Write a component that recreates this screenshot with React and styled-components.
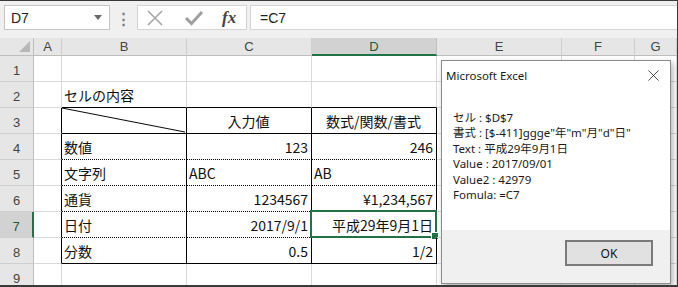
import React from 'react';
import styled, { createGlobalStyle } from 'styled-components';

const Global = createGlobalStyle`
  html, body { margin: 0; padding: 0; background: #fff; }
  * { box-sizing: border-box; }
`;

const Frame = styled.div`
  position: relative;
  width: 678px;
  height: 287px;
  overflow: hidden;
  background: #f0f0f0;
  border-top: 1px solid #3a3a3a;
  border-right: 1px solid #3a3a3a;
  border-bottom: 2px solid #3a3a3a;
  font-family: "Noto Sans CJK JP", "Noto Sans", sans-serif;
`;

const Toolbar = styled.div`
  height: 37px;
  display: flex;
  align-items: flex-start;
  padding: 4px 0 0 4px;
`;

const NameBox = styled.div`
  width: 106px;
  height: 25px;
  background: #fff;
  border: 1px solid #c6c6c6;
  display: flex;
  align-items: center;
  justify-content: space-between;
  padding: 0 7px 0 6px;
  font-family: "Liberation Sans", Arial, sans-serif;
  font-size: 14px;
  color: #222;
`;

const Caret = styled.span`
  width: 0;
  height: 0;
  border-left: 4px solid transparent;
  border-right: 4px solid transparent;
  border-top: 5px solid #6a6a6a;
`;

const Dots = styled.div`
  width: 27px;
  height: 25px;
  display: flex;
  align-items: center;
  justify-content: center;
  color: #7a7a7a;
  font-size: 15px;
  font-weight: bold;
`;

const IconBox = styled.div`
  width: 110px;
  height: 25px;
  background: #fff;
  border: 1px solid #d4d4d4;
  display: flex;
  align-items: center;
  padding-left: 8px;
  gap: 20px;
`;

const Fx = styled.span`
  font-family: "Liberation Serif", "Times New Roman", serif;
  font-style: italic;
  font-weight: bold;
  font-size: 17px;
  color: #444;
  margin-left: -2px;
`;

const FormulaInput = styled.div`
  flex: 1;
  height: 25px;
  margin-left: 3px;
  background: #fff;
  border: 1px solid #d4d4d4;
  border-right: none;
  display: flex;
  align-items: center;
  padding-left: 9px;
  font-family: "Liberation Sans", Arial, sans-serif;
  font-size: 14px;
  color: #222;
`;

const Sheet = styled.div`
  display: grid;
  grid-template-columns: 34px 28px 125px 125px 125px 125px 73px 1fr;
  grid-template-rows: 18px repeat(9, 26px);
  background: #fff;
`;

const ColHead = styled.div`
  background: ${p => (p.$active ? '#d2d2d2' : '#e6e6e6')};
  border-right: 1px solid ${p => (p.$active ? '#c0c0c0' : '#cfcfcf')};
  border-bottom: ${p => (p.$active ? '2px solid #217346' : '1px solid #bdbdbd')};
  display: flex;
  align-items: center;
  justify-content: center;
  font-family: "Liberation Sans", Arial, sans-serif;
  font-size: 13px;
  color: ${p => (p.$active ? '#1f5b3a' : '#444')};
`;

const Corner = styled.div`
  position: relative;
  background: #e6e6e6;
  border-right: 1px solid #bdbdbd;
  border-bottom: 1px solid #bdbdbd;
  &::after {
    content: '';
    position: absolute;
    right: 3px;
    bottom: 3px;
    border-left: 11px solid transparent;
    border-bottom: 11px solid #b8b8b8;
  }
`;

const RowHead = styled.div`
  background: ${p => (p.$active ? '#d2d2d2' : '#e6e6e6')};
  border-bottom: 1px solid #cfcfcf;
  border-right: ${p => (p.$active ? '2px solid #217346' : '1px solid #bdbdbd')};
  display: flex;
  align-items: flex-end;
  justify-content: center;
  padding-bottom: 3px;
  font-family: "Liberation Sans", Arial, sans-serif;
  font-size: 13px;
  color: ${p => (p.$active ? '#1f5b3a' : '#444')};
`;

const lineStyle = {
  grid: '1px solid #d9d9d9',
  solid: '1px solid #000',
  dotted: '1px dotted #000',
};

const Cell = styled.div`
  position: relative;
  border-right: ${p => lineStyle[p.$r || 'grid']};
  border-bottom: ${p => lineStyle[p.$b || 'grid']};
  display: flex;
  align-items: flex-end;
  justify-content: ${p => ({ left: 'flex-start', right: 'flex-end', center: 'center' }[p.$align || 'left'])};
  padding: 0 3px 2px 2px;
  font-size: 14px;
  color: #111;
  white-space: nowrap;
`;

const Diagonal = styled.svg`
  position: absolute;
  inset: 0;
  width: 100%;
  height: 100%;
`;

const Selection = styled.div`
  position: absolute;
  left: -2px;
  top: -2px;
  right: -1px;
  bottom: -1px;
  border: 2px solid #217346;
  pointer-events: none;
  &::after {
    content: '';
    position: absolute;
    right: -4px;
    bottom: -4px;
    width: 6px;
    height: 6px;
    background: #217346;
    border: 1px solid #fff;
  }
`;

const Dialog = styled.div`
  position: absolute;
  left: 441px;
  top: 59px;
  width: 230px;
  height: 224px;
  background: #fff;
  border: 1px solid #8c8c8c;
  box-shadow: 2px 3px 6px rgba(0, 0, 0, 0.3);
  display: flex;
  flex-direction: column;
  font-family: "Noto Sans", "Noto Sans CJK JP", sans-serif;
  color: #1a1a1a;
`;

const TitleBar = styled.div`
  height: 28px;
  display: flex;
  align-items: center;
  justify-content: space-between;
  padding: 0 10px 0 4px;
  font-size: 11.5px;
`;

const Body = styled.div`
  flex: 1;
  padding: 21px 0 0 11px;
  font-size: 11.5px;
  line-height: 15.4px;
  font-family: "Noto Sans", "Noto Sans CJK JP", sans-serif;
`;

const Footer = styled.div`
  height: 53px;
  background: #f0f0f0;
  display: flex;
  justify-content: flex-end;
  align-items: flex-start;
  padding: 10px 17px 0 0;
`;

const OkButton = styled.button`
  width: 88px;
  height: 26px;
  background: #e1e1e1;
  border: 2px solid #7a7a7a;
  font-family: "Noto Sans", sans-serif;
  font-size: 12px;
  color: #111;
  padding: 0;
`;

const cols = ['A', 'B', 'C', 'D', 'E', 'F', 'G'];

const table = {
  2: { B: { text: 'セルの内容' } },
  3: { B: { diag: true }, C: { text: '入力値', align: 'center' }, D: { text: '数式/関数/書式', align: 'center' } },
  4: { B: { text: '数値' }, C: { text: '123', align: 'right' }, D: { text: '246', align: 'right' } },
  5: { B: { text: '文字列' }, C: { text: 'ABC' }, D: { text: 'AB' } },
  6: { B: { text: '通貨' }, C: { text: '1234567', align: 'right' }, D: { text: '¥1,234,567', align: 'right' } },
  7: { B: { text: '日付' }, C: { text: '2017/9/1', align: 'right' }, D: { text: '平成29年9月1日', align: 'right', selected: true } },
  8: { B: { text: '分数' }, C: { text: '0.5', align: 'right' }, D: { text: '1/2', align: 'right' } },
};

const inTable = (r, c) => r >= 3 && r <= 8 && ['B', 'C', 'D'].includes(c);

function borders(r, c) {
  let right = 'grid';
  let bottom = 'grid';
  if (inTable(r, c)) {
    right = 'solid';
    bottom = r === 3 || r === 8 ? 'solid' : 'dotted';
  }
  if (c === 'A' && r >= 3 && r <= 8) right = 'solid';
  if (r === 2 && ['B', 'C', 'D'].includes(c)) bottom = 'solid';
  return { right, bottom };
}

const Cross = ({ size = 18, color = '#a6a6a6', width = 1.6 }) => (
  <svg width={size} height={size} viewBox="0 0 18 18">
    <path d="M2 2 L16 16 M16 2 L2 16" stroke={color} strokeWidth={width} fill="none" />
  </svg>
);

const Check = () => (
  <svg width="20" height="18" viewBox="0 0 20 18">
    <path d="M2 9 L7.5 14.5 L18 3" stroke="#a0a0a0" strokeWidth="3" fill="none" />
  </svg>
);

export default function App() {
  const rows = [1, 2, 3, 4, 5, 6, 7, 8, 9];
  return (
    <Frame>
      <Global />
      <Toolbar>
        <NameBox>
          D7
          <Caret />
        </NameBox>
        <Dots>⋮</Dots>
        <IconBox>
          <Cross />
          <Check />
          <Fx>fx</Fx>
        </IconBox>
        <FormulaInput>=C7</FormulaInput>
      </Toolbar>
      <Sheet>
        <Corner />
        {cols.map(c => (
          <ColHead key={c} $active={c === 'D'}>{c}</ColHead>
        ))}
        {rows.map(r => (
          <React.Fragment key={r}>
            <RowHead $active={r === 7}>{r}</RowHead>
            {cols.map(c => {
              const cell = (table[r] && table[r][c]) || {};
              const b = borders(r, c);
              return (
                <Cell key={c} $r={b.right} $b={b.bottom} $align={cell.align}>
                  {cell.diag && (
                    <Diagonal viewBox="0 0 125 26" preserveAspectRatio="none">
                      <line x1="0" y1="0" x2="124" y2="25" stroke="#000" strokeWidth="1" />
                    </Diagonal>
                  )}
                  {cell.text}
                  {cell.selected && <Selection />}
                </Cell>
              );
            })}
          </React.Fragment>
        ))}
      </Sheet>
      <Dialog>
        <TitleBar>
          Microsoft Excel
          <Cross size={13} color="#222" width={1.1} />
        </TitleBar>
        <Body>
          <div>セル : $D$7</div>
          <div>書式 : [$-411]ggge"年"m"月"d"日"</div>
          <div>Text : 平成29年9月1日</div>
          <div>Value : 2017/09/01</div>
          <div>Value2 : 42979</div>
          <div>Fomula: =C7</div>
        </Body>
        <Footer>
          <OkButton>OK</OkButton>
        </Footer>
      </Dialog>
    </Frame>
  );
}
